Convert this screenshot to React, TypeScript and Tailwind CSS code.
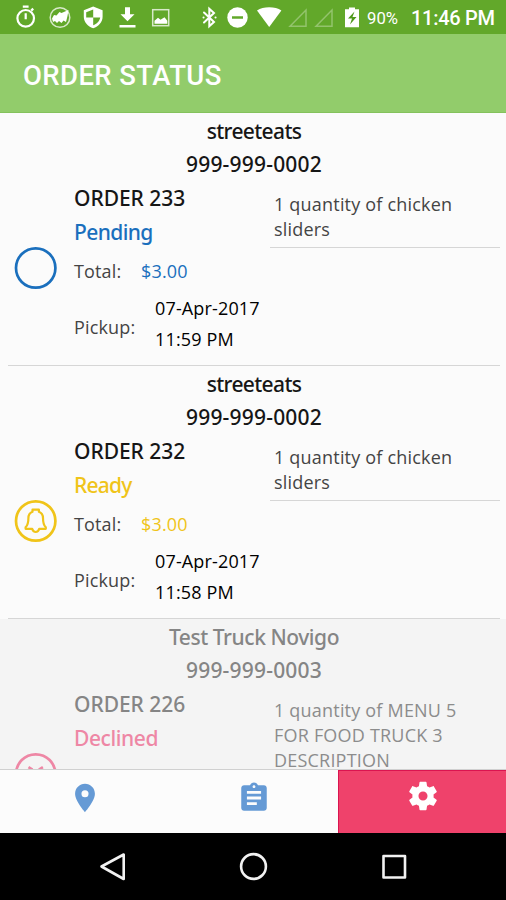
import type { ReactNode } from 'react';

type Order = {
  truck: string;
  truckClass: string;
  phone: string;
  id: string;
  status: string;
  statusClass: string;
  colorClass: string;
  items: string[];
  date?: string;
  time?: string;
  icon: 'none' | 'bell' | 'sad';
  inactive?: boolean;
};

const orders: Order[] = [
  {
    truck: 'streeteats', truckClass: 'tracking-[-0.65px]', phone: '999-999-0002', id: 'ORDER 233',
    status: 'Pending', statusClass: 'tracking-[-0.6px]', colorClass: 'text-[#1a6fbd]',
    items: ['1 quantity of chicken', 'sliders'], date: '07-Apr-2017', time: '11:59 PM', icon: 'none',
  },
  {
    truck: 'streeteats', truckClass: 'tracking-[-0.65px]', phone: '999-999-0002', id: 'ORDER 232',
    status: 'Ready', statusClass: 'tracking-[-0.8px]', colorClass: 'text-[#f0c419]',
    items: ['1 quantity of chicken', 'sliders'], date: '07-Apr-2017', time: '11:58 PM', icon: 'bell',
  },
  {
    truck: 'Test Truck Novigo', truckClass: 'tracking-[-0.45px]', phone: '999-999-0003', id: 'ORDER 226',
    status: 'Declined', statusClass: 'tracking-[-0.4px]', colorClass: 'text-[#ee87a5]',
    items: ['1 quantity of MENU 5', 'FOR FOOD TRUCK 3', 'DESCRIPTION'], icon: 'sad', inactive: true,
  },
];

function StatusBar() {
  return (
    <div className="h-[34px] shrink-0 bg-[#62a82a] text-white">
      <svg width="506" height="34" viewBox="0 0 506 34" fill="none">
        {/* stopwatch */}
        <g stroke="#fff" strokeWidth="2.2">
          <circle cx="25.7" cy="18.3" r="8.3" />
          <path d="M22.8 6.7h5.8M25.7 13.3v6M31.2 10.6l2-2" />
        </g>
        {/* round badge */}
        <circle cx="60" cy="17.5" r="9.8" stroke="#fff" strokeOpacity=".75" strokeWidth="1.5" />
        <path d="M52 18.500l2-3.500 2.500.5 3-3.500 2 1 7-3-1 6-1.500 6-2.500-1.500-2 2.500-2.500-2-2 2-2-2-2 1z" fill="#fff" />
        {/* shield */}
        <path fillRule="evenodd" clipRule="evenodd" d="M93.2 6.400l9.400 3.800v6.500c0 5.500-4 9.600-9.400 11.500-5.400-1.900-9.400-6-9.400-11.500v-6.500z M93.200 9.500v8h7c-.5 3.700-3.500 6.500-7 7.800v-7.800h-7v-5.200z" fill="#fff" />
        {/* download */}
        <path d="M125 7.300h5v6.900h4.500l-7 7-7-7h4.500zM119.500 25h16v2.600h-16z" fill="#fff" />
        {/* picture */}
        <rect x="152.700" y="9.700" width="16" height="16" stroke="#fff" strokeOpacity=".75" strokeWidth="1.500" />
        <path d="M154.500 23.800v-3l3.500-3 2.500 2 4-2.500 2.800 3.500v3z" fill="#fff" />
        {/* bluetooth */}
        <path d="M204 12.500l10 9.500-4.700 4.300V8.700L214 13l-10 9.500M203.500 17.500h.1M215.500 17.500h.1" stroke="#fff" strokeWidth="2" strokeLinecap="round" />
        {/* do not disturb */}
        <circle cx="237.500" cy="17.500" r="10.200" fill="#fff" />
        <path d="M232 17.500h11" stroke="#62a82a" strokeWidth="2.500" />
        {/* wifi */}
        <path d="M257 10.500c3.200-2.200 7.500-3.300 12.200-3.300s9 1.100 12.200 3.300L269.200 27z" fill="#fff" />
        {/* empty signals */}
        <path d="M290 26.300h16V10zM316 26.300h16V10z" stroke="#93c36c" strokeWidth="1.500" />
        {/* charging battery */}
        <path d="M345 9.300h4V7.500h6v1.800h4v18h-14z" fill="#fff" />
        <path d="M354.500 11.500l-6.500 7h4l-2 6 6.500-7.500h-4z" fill="#4f981c" />
        <text x="367" y="24" fill="#fff" fontFamily="Roboto, sans-serif" fontSize="16.500" textLength="31" lengthAdjust="spacingAndGlyphs">90%</text>
        <text x="411" y="25.300" fill="#fff" fontFamily="Roboto, sans-serif" fontSize="20" fontWeight="500" textLength="84" lengthAdjust="spacing">11:46 PM</text>
      </svg>
    </div>
  );
}

function StatusIcon({ kind }: { kind: Order['icon'] }) {
  return (
    <svg width="44" height="44" viewBox="0 0 44 44" fill="none" stroke="currentColor" strokeWidth="2.700" className="block">
      <circle cx="21.700" cy="22" r="19.700" />
      {kind === 'bell' && (
        <path strokeWidth="2.200" strokeLinejoin="round" d="M18.500 10.700h6.400v2c3 1.200 4.100 3.300 4.100 6.300 0 5 .8 7.500 2.800 9.300v1.500h-6.600c-.5 2-1.700 3.200-3.500 3.200s-3-1.200-3.500-3.200h-6.600v-1.500c2-1.800 2.800-4.300 2.800-9.300 0-3 1.100-5.100 4.100-6.300z" />
      )}
      {kind === 'sad' && <path strokeWidth="2.600" d="M14.500 15.200l4 2.500M28.900 15.200l-4 2.500M14 31c3-5 13-5 16 0" />}
    </svg>
  );
}

function Heading({ children, className }: { children: ReactNode; className: string }) {
  return <div className={`whitespace-nowrap font-['Noto_Sans',sans-serif] text-[21px] font-medium ${className}`}>{children}</div>;
}

function OrderCard({ order }: { order: Order }) {
  const ink = order.inactive ? 'text-[#858585]' : 'text-[#161616]';
  const soft = order.inactive ? 'text-[#8c8c8c]' : 'text-[#444]';
  return (
    <section className={`h-[253px] shrink-0 pl-2 pr-[6px] ${order.inactive ? 'bg-[#f4f4f4]' : 'bg-[#fbfbfb]'}`}>
      <div className="h-full border-b border-[#d6d6d6] pt-0.5">
        <Heading className={`text-center leading-[33px] ${ink} ${order.truckClass}`}>{order.truck}</Heading>
        <Heading className={`text-center leading-[33px] tracking-[0.2px] ${ink}`}>{order.phone}</Heading>
        <div className="flex h-[174px]">
          <div className={`flex w-[66px] items-center pl-[6px] ${order.colorClass}`}>
            <StatusIcon kind={order.icon} />
          </div>
          <div className="w-[196px] whitespace-nowrap font-['Open_Sans',sans-serif] text-[18px] tracking-[0.15px]">
            <Heading className={`leading-[34px] tracking-[-0.05px] ${ink}`}>{order.id}</Heading>
            <Heading className={`leading-[34px] ${order.colorClass} ${order.statusClass}`}>{order.status}</Heading>
            {order.date && (
              <>
                <div className="flex leading-[44px]">
                  <span className={`w-[67px] ${soft}`}>Total:</span>
                  <span className={`font-medium ${order.colorClass}`}>$3.00</span>
                </div>
                <div className="flex items-center leading-[31px]">
                  <span className={`w-[81px] pt-[7px] ${soft}`}>Pickup:</span>
                  <div className="text-black">
                    <div>{order.date}</div>
                    <div>{order.time}</div>
                  </div>
                </div>
              </>
            )}
          </div>
          <div className={`mt-[10px] grow whitespace-nowrap pl-1 pt-px font-['Open_Sans',sans-serif] text-[18px] leading-[25px] tracking-[0.2px] ${soft} ${order.inactive ? '' : 'h-[57px] border-b border-[#d6d6d6]'}`}>
            {order.items.map((item) => <div key={item}>{item}</div>)}
          </div>
        </div>
      </div>
    </section>
  );
}

function TabBar() {
  return (
    <nav className="flex h-[64px] shrink-0 border-t border-[#d0d0d0] bg-[#fcfcfc] text-[#659ad5]">
      <div className="flex w-[169px] justify-center pt-[11px]">
        <svg width="34" height="34" viewBox="0 0 24 24" fill="currentColor"><path d="M12 2C8.130 2 5 5.130 5 9c0 5.250 7 13 7 13s7-7.750 7-13c0-3.870-3.130-7-7-7zm0 9.500a2.500 2.500 0 010-5 2.500 2.500 0 010 5z" /></svg>
      </div>
      <div className="flex w-[169px] justify-center pt-[11px]">
        <svg width="34" height="34" viewBox="0 0 24 24" fill="currentColor"><path d="M19 3h-4.180C14.400 1.840 13.300 1 12 1c-1.300 0-2.400.84-2.820 2H5c-1.100 0-2 .9-2 2v14c0 1.100.9 2 2 2h14c1.100 0 2-.9 2-2V5c0-1.100-.9-2-2-2zm-7 0c.55 0 1 .45 1 1s-.45 1-1 1-1-.45-1-1 .45-1 1-1zm2 14H7v-2h7v2zm3-4H7v-2h10v2zm0-4H7V7h10v2z" /></svg>
      </div>
      <div className="flex w-[168px] justify-center border-l border-t border-[#db1450] bg-[#ef426b] pt-[8px] text-white">
        <svg width="34" height="34" viewBox="0 0 24 24" fill="currentColor"><path d="M19.430 12.980c.04-.32.07-.64.07-.98s-.03-.66-.07-.98l2.110-1.650c.19-.15.24-.42.12-.64l-2-3.460c-.12-.22-.39-.3-.61-.22l-2.490 1c-.52-.4-1.080-.73-1.690-.98l-.38-2.650C14.460 2.180 14.250 2 14 2h-4c-.25 0-.46.18-.49.42l-.38 2.650c-.61.25-1.170.59-1.690.98l-2.490-1c-.23-.09-.49 0-.61.22l-2 3.460c-.13.22-.07.49.12.64l2.110 1.650c-.04.32-.07.65-.07.98s.03.66.07.98l-2.110 1.650c-.19.15-.24.42-.12.64l2 3.460c.12.22.39.3.61.22l2.490-1c.52.4 1.080.73 1.690.98l.38 2.650c.03.24.24.42.49.42h4c.25 0 .46-.18.49-.42l.38-2.650c.61-.25 1.170-.59 1.690-.98l2.490 1c.23.09.49 0 .61-.22l2-3.460c.12-.22.07-.49-.12-.64l-2.110-1.650zM12 15.200c-1.770 0-3.200-1.430-3.200-3.200s1.430-3.200 3.200-3.200 3.200 1.430 3.200 3.200-1.430 3.200-3.200 3.200z" /></svg>
      </div>
    </nav>
  );
}

function SystemNav() {
  return (
    <div className="h-[67px] shrink-0 bg-black">
      <svg width="506" height="67" viewBox="0 0 506 67" fill="none" stroke="#f2f2f2" strokeWidth="2.600" strokeLinejoin="round">
        <path d="M101.500 33.500L123.700 21.500v24.500z" />
        <circle cx="253.500" cy="33.500" r="12.400" />
        <rect x="383.500" y="23" width="21.500" height="21.500" />
      </svg>
    </div>
  );
}

export default function App() {
  return (
    <main className="flex h-[900px] w-[506px] flex-col overflow-hidden bg-[#fbfbfb]">
      <StatusBar />
      <header className="flex h-[79px] shrink-0 items-center border-b border-[#84c25c] bg-[#92cc6b] pl-[23px] pt-[6px]">
        <h1 className="font-[Roboto,sans-serif] text-[27.500px] font-medium tracking-[0.400px] text-white">ORDER STATUS</h1>
      </header>
      <div className="flex h-[656px] shrink-0 flex-col overflow-hidden">
        {orders.map((order) => <OrderCard key={order.id} order={order} />)}
      </div>
      <TabBar />
      <SystemNav />
    </main>
  );
}
